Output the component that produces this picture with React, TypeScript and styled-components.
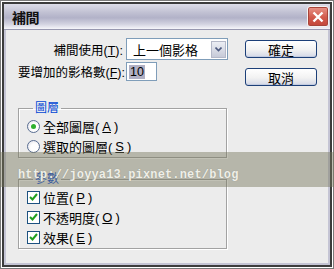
import React from 'react';
import styled, { createGlobalStyle } from 'styled-components';

const GlobalStyle = createGlobalStyle`
  html, body {
    margin: 0;
    padding: 0;
    background: #fff;
  }
  body {
    font-family: "Liberation Sans", "Noto Sans CJK TC", sans-serif;
    color: #000;
  }
`;

const Frame = styled.div`
  position: relative;
  width: 334px;
  height: 269px;
  box-sizing: border-box;
  border: 1px solid #7a7a7a;
  padding: 1px;
  background: #fff;
`;

const Window = styled.div`
  height: 100%;
  box-sizing: border-box;
  border: 2px solid #3c3c3c;
  display: flex;
  flex-direction: column;
`;

const TitleBar = styled.div`
  height: 26px;
  flex: none;
  box-sizing: border-box;
  display: flex;
  align-items: center;
  justify-content: space-between;
  padding: 0 1px 0 8px;
  border-bottom: 1px solid #9898b0;
  background: linear-gradient(#dcdce8 0%, #c0c0d2 35%, #b2b2c8 55%, #d2d2e0 80%, #f6f6fa 100%);
`;

const Title = styled.span`
  font-size: 14px;
  font-weight: 700;
  color: #111;
  letter-spacing: -0.5px;
`;

const CloseButton = styled.div`
  width: 22px;
  height: 21px;
  box-sizing: border-box;
  border: 1px solid #f2f2f2;
  border-radius: 3px;
  background: linear-gradient(#e8958a, #d25a4c 55%, #c2463a);
  box-shadow: inset 0 0 0 1px #a8443a;
  display: flex;
  align-items: center;
  justify-content: center;
`;

const Body = styled.div`
  flex: 1;
  background: #ececec;
  border: 2px solid #c4c4d4;
  border-top: none;
  padding: 8px 0 0 12px;
`;

const Top = styled.div`
  display: flex;
  align-items: flex-start;
`;

const Form = styled.div`
  display: grid;
  grid-template-columns: 105px 102px;
  column-gap: 3px;
  row-gap: 2px;
  align-items: center;
`;

const Label = styled.span`
  font-size: 12.5px;
  text-align: right;
  white-space: nowrap;
`;

const Key = styled.span`
  text-decoration: underline;
  text-underline-offset: 1px;
`;

const Select = styled.div`
  height: 22px;
  box-sizing: border-box;
  border: 1px solid #7f9db9;
  background: #fff;
  display: flex;
  align-items: center;
  justify-content: space-between;
  padding: 0 1px 0 6px;
  font-size: 13px;
`;

const Arrow = styled.div`
  width: 15px;
  height: 17px;
  box-sizing: border-box;
  border: 1px solid #b4b8c8;
  background: linear-gradient(#eceef4, #c6cad8);
  display: flex;
  align-items: center;
  justify-content: center;
`;

const Input = styled.div`
  width: 31px;
  height: 19px;
  box-sizing: border-box;
  border: 1px solid #7f9db9;
  background: #fff;
  display: flex;
  align-items: center;
  padding-left: 2px;
  font-size: 12.5px;
`;

const Selected = styled.span`
  background: #b0b0c4;
  padding: 0 1px;
`;

const Buttons = styled.div`
  margin-left: 17px;
  padding-top: 2px;
  display: flex;
  flex-direction: column;
  gap: 10px;
`;

const Button = styled.div`
  width: 72px;
  height: 18px;
  box-sizing: border-box;
  border: 1px solid #1c3f78;
  border-radius: 3px;
  background: linear-gradient(#ffffff, #f2f2f2 55%, #d4d8e6);
  box-shadow: inset 0 -1px 0 #c2cbe0;
  display: flex;
  align-items: center;
  justify-content: center;
  font-size: 13px;
`;

const Group = styled.fieldset<{ $top: number }>`
  width: 209px;
  box-sizing: border-box;
  margin: ${p => p.$top}px 0 0;
  padding: 1px 0 1px 8px;
  border: 1px solid #a2a2a2;
  box-shadow: 1px 1px 0 #fff, inset 1px 1px 0 #fff;
  min-width: 0;
`;

const Legend = styled.legend`
  margin-left: 6px;
  padding: 0 2px;
  font-size: 12px;
  line-height: 14px;
  color: #0046d5;
`;

const Option = styled.div`
  height: 20px;
  display: flex;
  align-items: center;
  gap: 3px;
  font-size: 13px;
`;

const Radio = styled.span<{ $on?: boolean }>`
  width: 13px;
  height: 13px;
  box-sizing: border-box;
  border-radius: 50%;
  border: 1px solid #5a6e92;
  background: radial-gradient(circle at 60% 60%, #fff 40%, #dcdce4);
  display: flex;
  align-items: center;
  justify-content: center;
  &::after {
    content: "";
    width: 5px;
    height: 5px;
    border-radius: 50%;
    background: ${p => (p.$on ? '#2fb02f' : 'transparent')};
  }
`;

const Check = styled.span`
  width: 13px;
  height: 13px;
  box-sizing: border-box;
  border: 1px solid #1c5180;
  background: #fff;
  display: flex;
  align-items: center;
  justify-content: center;
`;

const Watermark = styled.div`
  position: absolute;
  top: 151px;
  left: -1px;
  right: -1px;
  height: 35px;
  box-sizing: border-box;
  padding: 16px 0 0 18px;
  background: rgba(118, 118, 92, 0.45);
  font-family: "Liberation Mono", monospace;
  font-size: 12px;
  line-height: 14px;
  font-weight: 700;
  letter-spacing: 0.15px;
  color: #efefe8;
  text-shadow: 0 0 1px #8a8a80;
`;

const CheckMark = () => (
  <svg width="9" height="8" viewBox="0 0 9 8">
    <path d="M1 4 L3.5 6.5 L8 1" fill="none" stroke="#22a022" strokeWidth="2" />
  </svg>
);

const App = () => (
  <>
    <GlobalStyle />
    <Frame>
      <Window>
        <TitleBar>
          <Title>補間</Title>
          <CloseButton>
            <svg width="12" height="12" viewBox="0 0 12 12">
              <path d="M1.5 1.5 L10.5 10.5 M10.5 1.5 L1.5 10.5" stroke="#fff" strokeWidth="2.4" />
            </svg>
          </CloseButton>
        </TitleBar>
        <Body>
          <Top>
            <Form>
              <Label>補間使用(<Key>T</Key>):</Label>
              <Select>
                上一個影格
                <Arrow>
                  <svg width="7" height="5" viewBox="0 0 7 5">
                    <path d="M0.5 0.5 L3.5 3.5 L6.5 0.5" fill="none" stroke="#4d5a80" strokeWidth="1.6" />
                  </svg>
                </Arrow>
              </Select>
              <Label>要增加的影格數(<Key>F</Key>):</Label>
              <Input>
                <Selected>10</Selected>
              </Input>
            </Form>
            <Buttons>
              <Button>確定</Button>
              <Button>取消</Button>
            </Buttons>
          </Top>
          <Group $top={15}>
            <Legend>圖層</Legend>
            <Option>
              <Radio $on />
              全部圖層(<Key>A</Key>)
            </Option>
            <Option>
              <Radio />
              選取的圖層(<Key>S</Key>)
            </Option>
          </Group>
          <Group $top={14}>
            <Legend>參數</Legend>
            <Option>
              <Check><CheckMark /></Check>
              位置(<Key>P</Key>)
            </Option>
            <Option>
              <Check><CheckMark /></Check>
              不透明度(<Key>O</Key>)
            </Option>
            <Option>
              <Check><CheckMark /></Check>
              效果(<Key>E</Key>)
            </Option>
          </Group>
        </Body>
      </Window>
      <Watermark>http://joyya13.pixnet.net/blog</Watermark>
    </Frame>
  </>
);

export default App;
